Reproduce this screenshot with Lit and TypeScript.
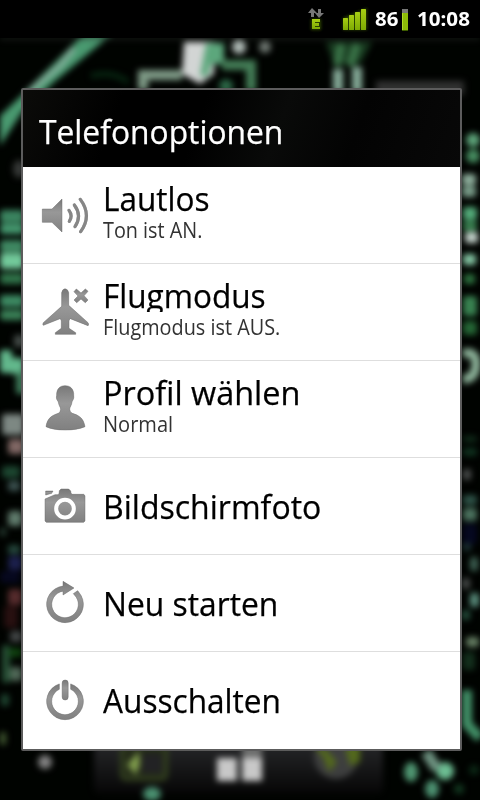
import { LitElement, html, css, svg } from "lit";
import { customElement } from "lit/decorators.js";

const icons = {
  sound: { box: "33 33 144 144", art: svg`
    <path d="M37 87H66L96 57V156L66 127H37Z"/>
    <g fill="none" stroke="#868686" stroke-opacity="1" stroke-width="9.500" stroke-linecap="round">
      <path d="M117 91Q129 107 118 124"/><path d="M133 75Q157 107 135 140"/><path d="M151 58Q187 106 152 155"/>
    </g>` },
  plane: { box: "33 39 144 144", art: svg`
    <path d="M95 53Q97 42 105 41Q114 42 116 53V91L174 143Q178 149 174 152L121 131Q117 133 117 138V160L137 173V178H76V173L94 160V138Q94 133 90 131L40 151Q37 148 40 143L95 94Z"/>
    <path d="M139 42L153 54L166 42L174 49L162 62L174 75L166 83L153 72L140 83L132 75L144 63L132 50Z" stroke="#808080" stroke-width="2" stroke-linejoin="round"/>` },
  person: { box: "33 45 144 144", art: svg`
    <path d="M105 47C123 47 132 59 131 76C133 88 127 91 126 96C125 107 119 111 119 118Q119 126 127 130C145 136 160 142 165 170Q142 180 106 180Q69 180 48 170C52 143 67 136 85 130Q92 126 92 118C92 111 86 107 85 96C83 91 77 88 80 76C79 59 88 47 105 47Z"/>` },
  camera: { box: "33 336 144 144", art: svg`
    <path d="M47 363H69L65 370L47 375Z"/>
    <path d="M45 387L75 374H85Q88 372 88 362L93 357H116L122 363Q122 371 126 373H161L165 377V453L161 457H49L45 453Z"/>
    <circle cx="105" cy="416" r="26.500" fill="none" stroke="#fff" stroke-opacity="1" stroke-width="12"/>` },
  restart: { box: "33 27 144 144", art: svg`
    <path d="M99 34L132 54L99 75V63.500A40 40 0 1 0 133.300 74.700L130 71L143 62L147 67.500A55 55 0 1 1 99 48.300Z"/>` },
  power: { box: "33 318 144 144", art: svg`
    <path d="M88 341.700V357.800A40 40 0 1 0 122 357.800V341.700A55 55 0 1 1 88 341.700Z"/>
    <rect x="96.500" y="330" width="18" height="60" rx="9"/>` },
};

interface Option {
  icon: keyof typeof icons;
  title: string;
  stretch: number;
  note?: string;
  noteStretch?: number;
}

const options: Option[] = [
  { icon: "sound", title: "Lautlos", stretch: 0.955, note: "Ton ist AN.", noteStretch: 0.943 },
  { icon: "plane", title: "Flugmodus", stretch: 0.956, note: "Flugmodus ist AUS.", noteStretch: 0.945 },
  { icon: "person", title: "Profil wählen", stretch: 0.983, note: "Normal", noteStretch: 0.955 },
  { icon: "camera", title: "Bildschirmfoto", stretch: 0.971 },
  { icon: "restart", title: "Neu starten", stretch: 0.963 },
  { icon: "power", title: "Ausschalten", stretch: 0.958 },
];

// x, y, width, height, colour of the circuit-board glow beside the dialog
const glows: [number, number, number, number, string][] = [
  [0, 210, 24, 13, "#3b8560"], [0, 224, 24, 10, "#459a70"], [0, 240, 24, 12, "#3f8a63"],
  [0, 253, 24, 16, "#72c99a"], [0, 273, 24, 11, "#307349"], [0, 295, 24, 12, "#3d8b63"],
  [0, 310, 24, 10, "#3b8459"], [14, 335, 10, 12, "#454d49"], [0, 350, 12, 23, "#62b88c"],
  [10, 358, 14, 16, "#62b88c"], [16, 372, 9, 22, "#3e7c5a"], [2, 414, 22, 21, "#7d8883"],
  [8, 439, 16, 15, "#806764"], [2, 466, 18, 12, "#1c4630"], [8, 481, 12, 10, "#3c5351"],
  [8, 511, 14, 15, "#5f7a6b"], [0, 528, 6, 8, "#2b4438"], [8, 545, 12, 9, "#264a3f"],
  [8, 556, 14, 14, "#1c204d"], [0, 571, 20, 12, "#06081f"], [8, 589, 14, 16, "#552b2c"],
  [4, 606, 14, 22, "#281010"], [10, 631, 12, 11, "#424646"], [2, 645, 8, 38, "#264f35"],
  [9, 648, 13, 9, "#0f430f"], [10, 667, 12, 14, "#506857"], [1, 694, 8, 12, "#1f4631"],
  [0, 732, 6, 13, "#455e33"],
  [462, 174, 14, 11, "#8fb09d"], [462, 186, 14, 11, "#7a9e8a"], [463, 207, 14, 13, "#53ab79"],
  [463, 221, 14, 10, "#38804f"], [465, 232, 13, 11, "#c4d3cb"], [463, 254, 13, 11, "#85c7a4"],
  [464, 274, 11, 10, "#2d743f"], [463, 296, 14, 20, "#388250"], [463, 321, 14, 14, "#246534"],
  [463, 436, 14, 6, "#102e1b"], [463, 448, 14, 8, "#0f331f"], [463, 469, 8, 11, "#4d504f"],
  [463, 495, 14, 10, "#2e5448"], [463, 508, 14, 13, "#4b725e"], [463, 524, 14, 20, "#050820"],
  [463, 543, 8, 8, "#1e3637"], [470, 557, 8, 14, "#3f6354"], [462, 578, 8, 11, "#474b49"],
  [470, 593, 9, 14, "#5a8f7d"], [462, 610, 8, 10, "#254f3d"], [466, 637, 13, 10, "#657f63"],
  [463, 652, 12, 18, "#132f1c"],
];

@customElement("circuit-wallpaper")
export class CircuitWallpaper extends LitElement {
  static styles = css`
    :host { display: block; }
    svg { display: block; width: 480px; height: 800px; }
  `;
  render() {
    return html`<svg viewBox="0 0 480 800">
      <defs>
        <filter id="soft" x="-20%" y="-20%" width="140%" height="140%" color-interpolation-filters="sRGB"><feGaussianBlur stdDeviation="3.300"/></filter>
        <linearGradient id="dock" x2="0" y2="1"><stop stop-color="#27282a"/><stop offset="1" stop-color="#060606"/></linearGradient>
      </defs>
      <rect width="480" height="800" fill="#000300"/>
      <g filter="url(#soft)">
        <path d="M84 34H112L54 82L22 112L0 146V116L22 95Z" fill="#499a70"/>
        <path d="M74 48L60 66L28 93" stroke="#80ac98" stroke-width="6" fill="none"/>
        <path d="M0 38H480" stroke="#292d2a" stroke-width="2"/>
        <path d="M143 90V75H182" stroke="#7e9a86" stroke-width="10" fill="none"/>
        <path d="M184 42H214V74L200 84L182 74Z" fill="#d2d5d4"/>
        <path d="M206 43H224V64H211L208 76H200Z" fill="#5ca77c"/>
        <path d="M222 65H251V91" stroke="#437d56" stroke-width="10" fill="none"/>
        <circle cx="226" cy="86" r="7" fill="#2b6645"/>
        <circle cx="239" cy="47" r="7" fill="#aebab5"/><circle cx="265" cy="47" r="6" fill="#6f7872"/>
        <path d="M91 76Q112 70 128 82" stroke="#072912" stroke-width="5" fill="none"/>
        <path d="M326 42H372L360 64H334Z" fill="#183b20"/>
        <path d="M341 44L337 66M357 44L350 66" stroke="#3b7549" stroke-width="8"/>
        <path d="M338 69V92M357 67V92" stroke="#86ac99" stroke-width="10"/>
        <rect x="376" y="81" width="88" height="14" fill="#303130"/>
        ${glows.map(([x, y, w, h, c]) => svg`<rect x=${x} y=${y} width=${w} height=${h} rx="3" fill=${c}/>`)}
        <circle cx="473" cy="140" r="7" fill="#5ca479"/><circle cx="473" cy="156" r="7" fill="#468d60"/>
        <ellipse cx="19" cy="169" rx="6" ry="9" fill="#363937"/>
        <path d="M463 354Q476 350 476 364Q476 379 463 379" stroke="#8fb69c" stroke-width="9" fill="none"/>
        <path d="M467 690V724L480 738" stroke="#429168" stroke-width="10" fill="none"/>
        <rect x="94" y="742" width="289" height="52" rx="6" fill="url(#dock)"/>
        <rect x="122" y="746" width="44" height="33" rx="4" fill="#222818" stroke="#34431f" stroke-width="4"/>
        <rect x="142" y="754" width="20" height="19" fill="#222224"/>
        <path d="M139 751L127 765L136 775L140 764Z" fill="#819e4d"/>
        <rect x="217" y="758" width="20" height="23" fill="#c8c8c8"/><rect x="242" y="758" width="20" height="23" fill="#c8c8c8"/>
        <rect x="242" y="744" width="20" height="14" fill="#6c6d6c"/>
        <circle cx="336" cy="757" r="22" fill="#3d3e3e"/>
        <path d="M314 747L323 757L329 772L337 762L325 748ZM345 748L360 744L360 762L350 766Z" fill="#53691c"/>
        <circle cx="45" cy="762" r="7" fill="#828282"/><ellipse cx="152" cy="794" rx="9" ry="7" fill="#4a9070"/>
        <ellipse cx="411" cy="772" rx="7" ry="10" fill="#4f9671"/><circle cx="445" cy="771" r="9" fill="#6cbd92"/>
        <path d="M426 752L437 769" stroke="#6d9280" stroke-width="11"/><ellipse cx="432" cy="789" rx="7" ry="9" fill="#4c9070"/>
        <circle cx="474" cy="770" r="5" fill="#0b2916"/><circle cx="459" cy="789" r="5" fill="#123920"/>
      </g>
    </svg>`;
  }
}

@customElement("option-icon")
export class OptionIcon extends LitElement {
  static properties = { name: {} };
  declare name: keyof typeof icons;
  static styles = css`
    :host { display: block; width: 48px; height: 48px; }
    svg { display: block; width: 48px; height: 48px; filter: drop-shadow(0 0.5px 0.4px #bbb); }
  `;
  render() {
    const icon = icons[this.name];
    return html`<svg viewBox=${icon.box}>
      <defs><linearGradient id="g" x1="0" x2="0" y2="1"><stop stop-color="#787878"/><stop offset=".4" stop-color="#989898"/><stop offset="1" stop-color="#808080"/></linearGradient></defs>
      <g fill="url(#g)" stroke="#606060" stroke-width="1.500" stroke-opacity=".6">${icon.art}</g>
    </svg>`;
  }
}

@customElement("app-root")
export class AppRoot extends LitElement {
  static styles = css`
    :host { display: block; position: relative; width: 480px; height: 800px; overflow: hidden; background: #000; font-family: "Open Sans", "Noto Sans", sans-serif; }
    circuit-wallpaper { position: absolute; inset: 0; }
    .screen { position: relative; height: 800px; }
    .bar { height: 38px; background: #000; display: flex; justify-content: flex-end; align-items: center; color: #fff; font-family: "Noto Sans", sans-serif; font-weight: 700; font-size: 20px; line-height: 38px; box-sizing: border-box; padding-right: 9px; }
    .bar svg { display: block; height: 38px; }
    .text { display: inline-block; transform-origin: 0 50%; white-space: nowrap; }
    .level { width: 24px; margin: 0 2px 0 1px; }
    .clock { width: 54px; margin-left: 8px; }
    .dialog { box-sizing: border-box; width: 441px; height: 663px; margin: 50px 0 0 21px; border: 2px solid #5c5c5c; border-radius: 2px; background: #fff; }
    .heading { box-sizing: border-box; height: 77px; padding: 19px 0 0 16px; font-size: 33px; line-height: 45px; color: #fff; -webkit-text-stroke: 0.25px #fff; background: linear-gradient(110deg, #0b0b09, #000 22%, #000 40%, #090a09 58%, #030303 75%, #080808); }
    .row { box-sizing: border-box; height: 97px; display: flex; align-items: center; padding-left: 18px; border-bottom: 1px solid #dedede; }
    .row:last-child { border-bottom-color: #fff; }
    .words { margin-left: 14px; padding-top: 2px; }
    .title { font-size: 33px; line-height: 44px; color: #000; -webkit-text-stroke: 0.25px #000; overflow: hidden; height: 44px; width: 320px; }
    .paired .title { line-height: 36px; height: 34px; }
    .paired .words { padding: 0 0 4px; }
    .note { font-size: 21px; line-height: 30px; height: 30px; color: #323232; }
  `;
  render() {
    const text = (s: string, k: number) => html`<span class="text" style="transform:scaleX(${k})">${s}</span>`;
    return html`
      <circuit-wallpaper></circuit-wallpaper>
      <div class="screen">
        <div class="bar">
          <svg width="71" viewBox="303 0 71 38">
            <defs>
              <filter id="glow" x="-40%" y="-40%" width="180%" height="180%"><feGaussianBlur stdDeviation="1.500"/></filter>
              <linearGradient id="green" x2="0" y2="1"><stop stop-color="#a7cf13"/><stop offset="1" stop-color="#7eaa04"/></linearGradient>
            </defs>
            <path d="M312 8L317 13H314V17H311V13H308ZM318 9H321V13H324L319 18L315 13H318Z" fill="#777"/>
            <g fill="#2c4200" filter="url(#glow)"><path d="M343 18L367 8V30H343ZM311 19H321V30H311Z"/></g>
            <g fill="url(#green)"><path d="M312 19H320V22H315V23H319V26H315V27H320V29H312Z"/>
              <rect x="343" y="18" width="5" height="12" rx=".5"/><rect x="349" y="15" width="5" height="15" rx=".5"/><rect x="355" y="12" width="5" height="18" rx=".5"/><rect x="361" y="9" width="5" height="21" rx=".5"/></g>
          </svg>
          <span class="level">${text("86", 1.02)}</span>
          <svg width="8" viewBox="401 0 8 38"><rect x="402" y="9" width="6" height="4" fill="#777"/><rect x="402" y="13" width="6" height="17" fill="#8dbb08"/><path d="M402 13h1v17h-1z" fill="#b1dc2a"/><path d="M402 30h6v1h-6z" fill="#3d5c00"/></svg>
          <span class="clock">${text("10:08", 1.03)}</span>
        </div>
        <div class="dialog">
          <div class="heading">${text("Telefonoptionen", 0.963)}</div>
          ${options.map((o) => html`<div class="row ${o.note ? "paired" : ""}">
            <option-icon .name=${o.icon}></option-icon>
            <div class="words">
              <div class="title">${text(o.title, o.stretch)}</div>
              ${o.note ? html`<div class="note">${text(o.note, o.noteStretch!)}</div>` : ""}
            </div>
          </div>`)}
        </div>
      </div>`;
  }
}
